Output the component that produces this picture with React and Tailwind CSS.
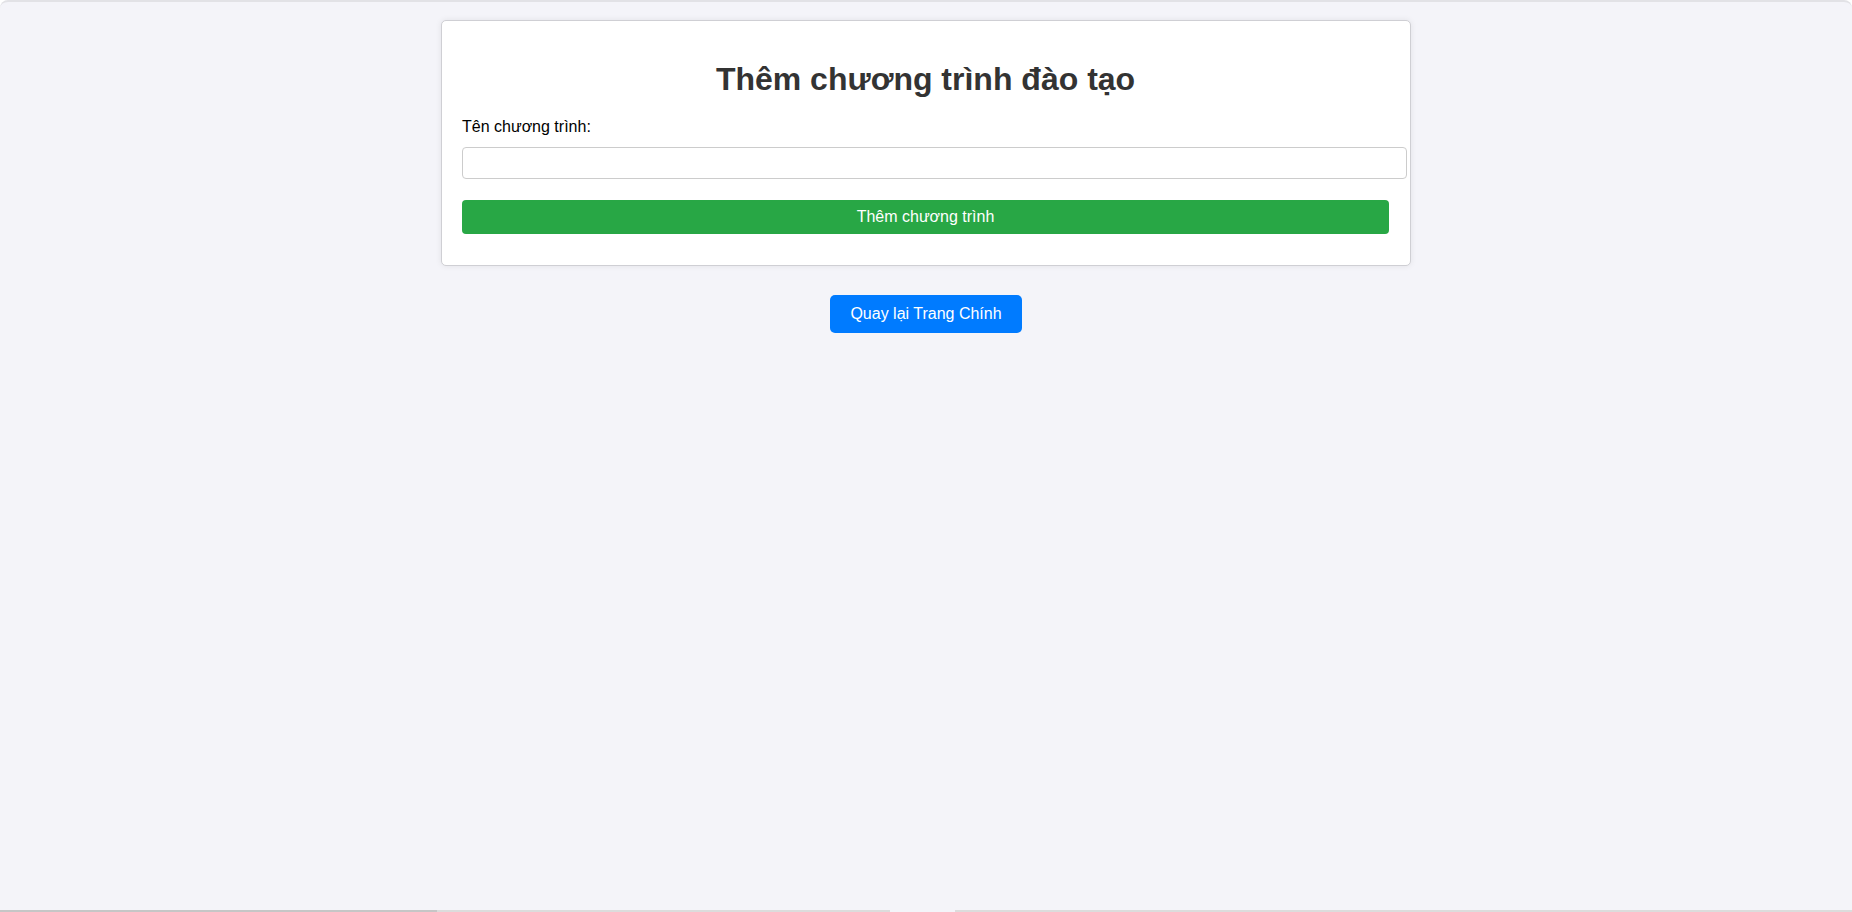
export default function App() {
  return (
    <div className="flex h-[912px] flex-col bg-white font-['Liberation_Sans',Arial,sans-serif]">
      <div className="flex flex-1 flex-col rounded-t-[8px] border-t-2 border-[#e2e2e6] bg-[#f4f4f9]">
        <div className="mt-[18px] flex justify-center">
          <div className="w-[970px] rounded-[5px] border border-[#cfcfd4] bg-white pt-[19px] pb-[18px] pl-[20px] pr-[21px] shadow-[0_0_6px_rgba(0,0,0,0.08)]">
            <h2 className="mt-[21px] text-center text-[32px] font-bold leading-[37px] text-[#333]">
              Thêm chương trình đào tạo
            </h2>
            <form onSubmit={(e) => e.preventDefault()}>
              <label className="mt-[20px] mb-[11px] block text-[16px] leading-[18px] text-black">
                Tên chương trình:
              </label>
              <input
                type="text"
                className="block h-[32px] w-[calc(100%+18px)] rounded-[4px] border border-[#ccc] bg-white px-2 outline-none"
              />
              <button
                type="submit"
                className="mt-[21px] mb-[13px] block h-[34px] w-full rounded-[4px] bg-[#28a745] text-[16px] text-white"
              >
                Thêm chương trình
              </button>
            </form>
          </div>
        </div>
        <div className="mt-[29px] flex justify-center">
          <a
            href="#"
            className="flex h-[38px] items-center rounded-[5px] bg-[#007bff] px-[20px] text-[16px] text-white"
          >
            Quay lại Trang Chính
          </a>
        </div>
      </div>
      <div className="flex h-[2px] bg-[#f4f4f9]">
        <div className="w-[437px] bg-[#c6c6c6]" />
        <div className="w-[453px] bg-[#dcdcdc]" />
        <div className="w-[65px]" />
        <div className="flex-1 bg-[#dcdcdc]" />
      </div>
    </div>
  );
}
